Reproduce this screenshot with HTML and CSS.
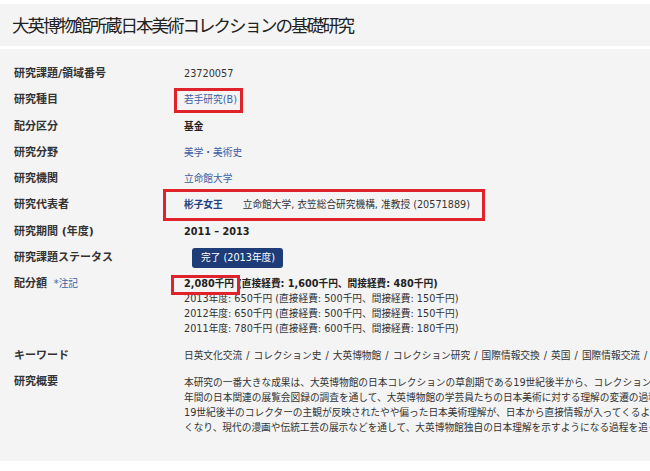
FILE: index.html
```html
<!DOCTYPE html>
<html lang="ja">
<head>
<meta charset="utf-8">
<title>大英博物館所蔵日本美術コレクションの基礎研究</title>
<link rel="stylesheet" href="styles.css">
</head>
<body>
<header class="title-bar">
  <h1 class="title">大英博物館所蔵日本美術コレクションの基礎研究</h1>
</header>
<main class="panel">
  <div class="row">
    <div class="label">研究課題/領域番号</div>
    <div class="value">23720057</div>
  </div>
  <div class="row">
    <div class="label">研究種目</div>
    <div class="value"><span class="mark mark-type"><a class="link" href="#">若手研究(B)</a></span></div>
  </div>
  <div class="row">
    <div class="label">配分区分</div>
    <div class="value strong">基金</div>
  </div>
  <div class="row">
    <div class="label">研究分野</div>
    <div class="value"><a class="link" href="#">美学・美術史</a></div>
  </div>
  <div class="row">
    <div class="label">研究機関</div>
    <div class="value"><a class="link" href="#">立命館大学</a></div>
  </div>
  <div class="row">
    <div class="label">研究代表者</div>
    <div class="value"><span class="mark mark-person"><a class="link person" href="#">彬子女王</a><span class="affil">立命館大学, 衣笠総合研究機構, 准教授 (20571889)</span></span></div>
  </div>
  <div class="row">
    <div class="label">研究期間 (年度)</div>
    <div class="value strong">2011 – 2013</div>
  </div>
  <div class="row">
    <div class="label">研究課題ステータス</div>
    <div class="value"><span class="badge">完了 (2013年度)</span></div>
  </div>
  <div class="row row-fee">
    <div class="label">配分額 <a class="note" href="#">*注記</a></div>
    <div class="value">
      <div class="fee-line strong"><span class="mark mark-fee">2,080千円</span> (直接経費: 1,600千円、間接経費: 480千円)</div>
      <div class="fee-line">2013年度: 650千円 (直接経費: 500千円、間接経費: 150千円)</div>
      <div class="fee-line">2012年度: 650千円 (直接経費: 500千円、間接経費: 150千円)</div>
      <div class="fee-line">2011年度: 780千円 (直接経費: 600千円、間接経費: 180千円)</div>
    </div>
  </div>
  <div class="row">
    <div class="label">キーワード</div>
    <div class="value keywords">日英文化交流 / コレクション史 / 大英博物館 / コレクション研究 / 国際情報交換 / 英国 / 国際情報交流 / 日本美術</div>
  </div>
  <div class="row row-summary">
    <div class="label">研究概要</div>
    <div class="value">
      <div class="sum-line">本研究の一番大きな成果は、大英博物館の日本コレクションの草創期である19世紀後半から、コレクションの形成</div>
      <div class="sum-line">年間の日本関連の展覧会図録の調査を通して、大英博物館の学芸員たちの日本美術に対する理解の変遷の過程を</div>
      <div class="sum-line">19世紀後半のコレクターの主観が反映されたやや偏った日本美術理解が、日本から直接情報が入ってくるように</div>
      <div class="sum-line">くなり、現代の漫画や伝統工芸の展示などを通して、大英博物館独自の日本理解を示すようになる過程を追った。</div>
    </div>
  </div>
</main>
</body>
</html>
```

FILE: styles.css
```css
html, body {
  margin: 0;
  padding: 0;
  overflow: hidden;
  background: #ffffff;
}

body {
  font-family: "DejaVu Sans", "Noto Sans CJK JP", sans-serif;
  color: #333333;
  width: 650px;
}

.title-bar {
  margin-top: 4px;
  height: 42px;
  background: #f4f4f4;
  padding-left: 12px;
  display: flex;
  align-items: center;
}

.title {
  margin: 0;
  font-family: "Noto Sans CJK JP", sans-serif;
  font-weight: normal;
  font-size: 17.5px;
  letter-spacing: -2px;
  color: #222222;
  line-height: 1;
  white-space: nowrap;
}

.panel {
  margin-top: 3px;
  background: #f4f4f4;
  padding: 12px 0 20px 0;
  overflow: hidden;
}

.row {
  display: grid;
  grid-template-columns: 170px 1fr;
  padding: 6px 0 6px 14px;
  line-height: 14.3px;
}

.label {
  font-size: 11px;
  font-weight: bold;
  color: #333333;
  white-space: nowrap;
}

.value {
  font-size: 9.7px;
  color: #333333;
  white-space: nowrap;
  min-width: 0;
}

.keywords {
  word-spacing: 1px;
}

.strong {
  font-weight: bold;
  color: #222222;
}

.link {
  color: #3b5ea6;
  text-decoration: none;
}

.note {
  color: #3b5ea6;
  text-decoration: none;
  font-weight: normal;
  font-size: 9.7px;
  margin-left: 3px;
}

.person {
  color: #24437f;
  font-weight: bold;
}

.affil {
  margin-left: 20px;
}

.badge {
  display: inline-block;
  background: #1d3c78;
  color: #ffffff;
  border-radius: 3px;
  line-height: 14px;
  padding: 3px 8px 3px 9px;
  margin: -3px 0 -3px 8px;
  vertical-align: top;
}

.row-fee .value {
  line-height: 14.8px;
}

.row-summary .value {
  line-height: 15px;
}

/* red annotation frames drawn over the content */
.mark {
  position: relative;
  display: inline-block;
}

.mark::after {
  content: "";
  position: absolute;
  border: 3px solid #e0222b;
  pointer-events: none;
}

.mark-type::after {
  left: -10px;
  right: -6px;
  top: -5px;
  bottom: -5px;
}

.mark-person::after {
  left: -21px;
  right: -15px;
  top: -9px;
  bottom: -8px;
}

.mark-fee::after {
  left: -13px;
  right: -6px;
  top: -2px;
  bottom: -3px;
}
```
